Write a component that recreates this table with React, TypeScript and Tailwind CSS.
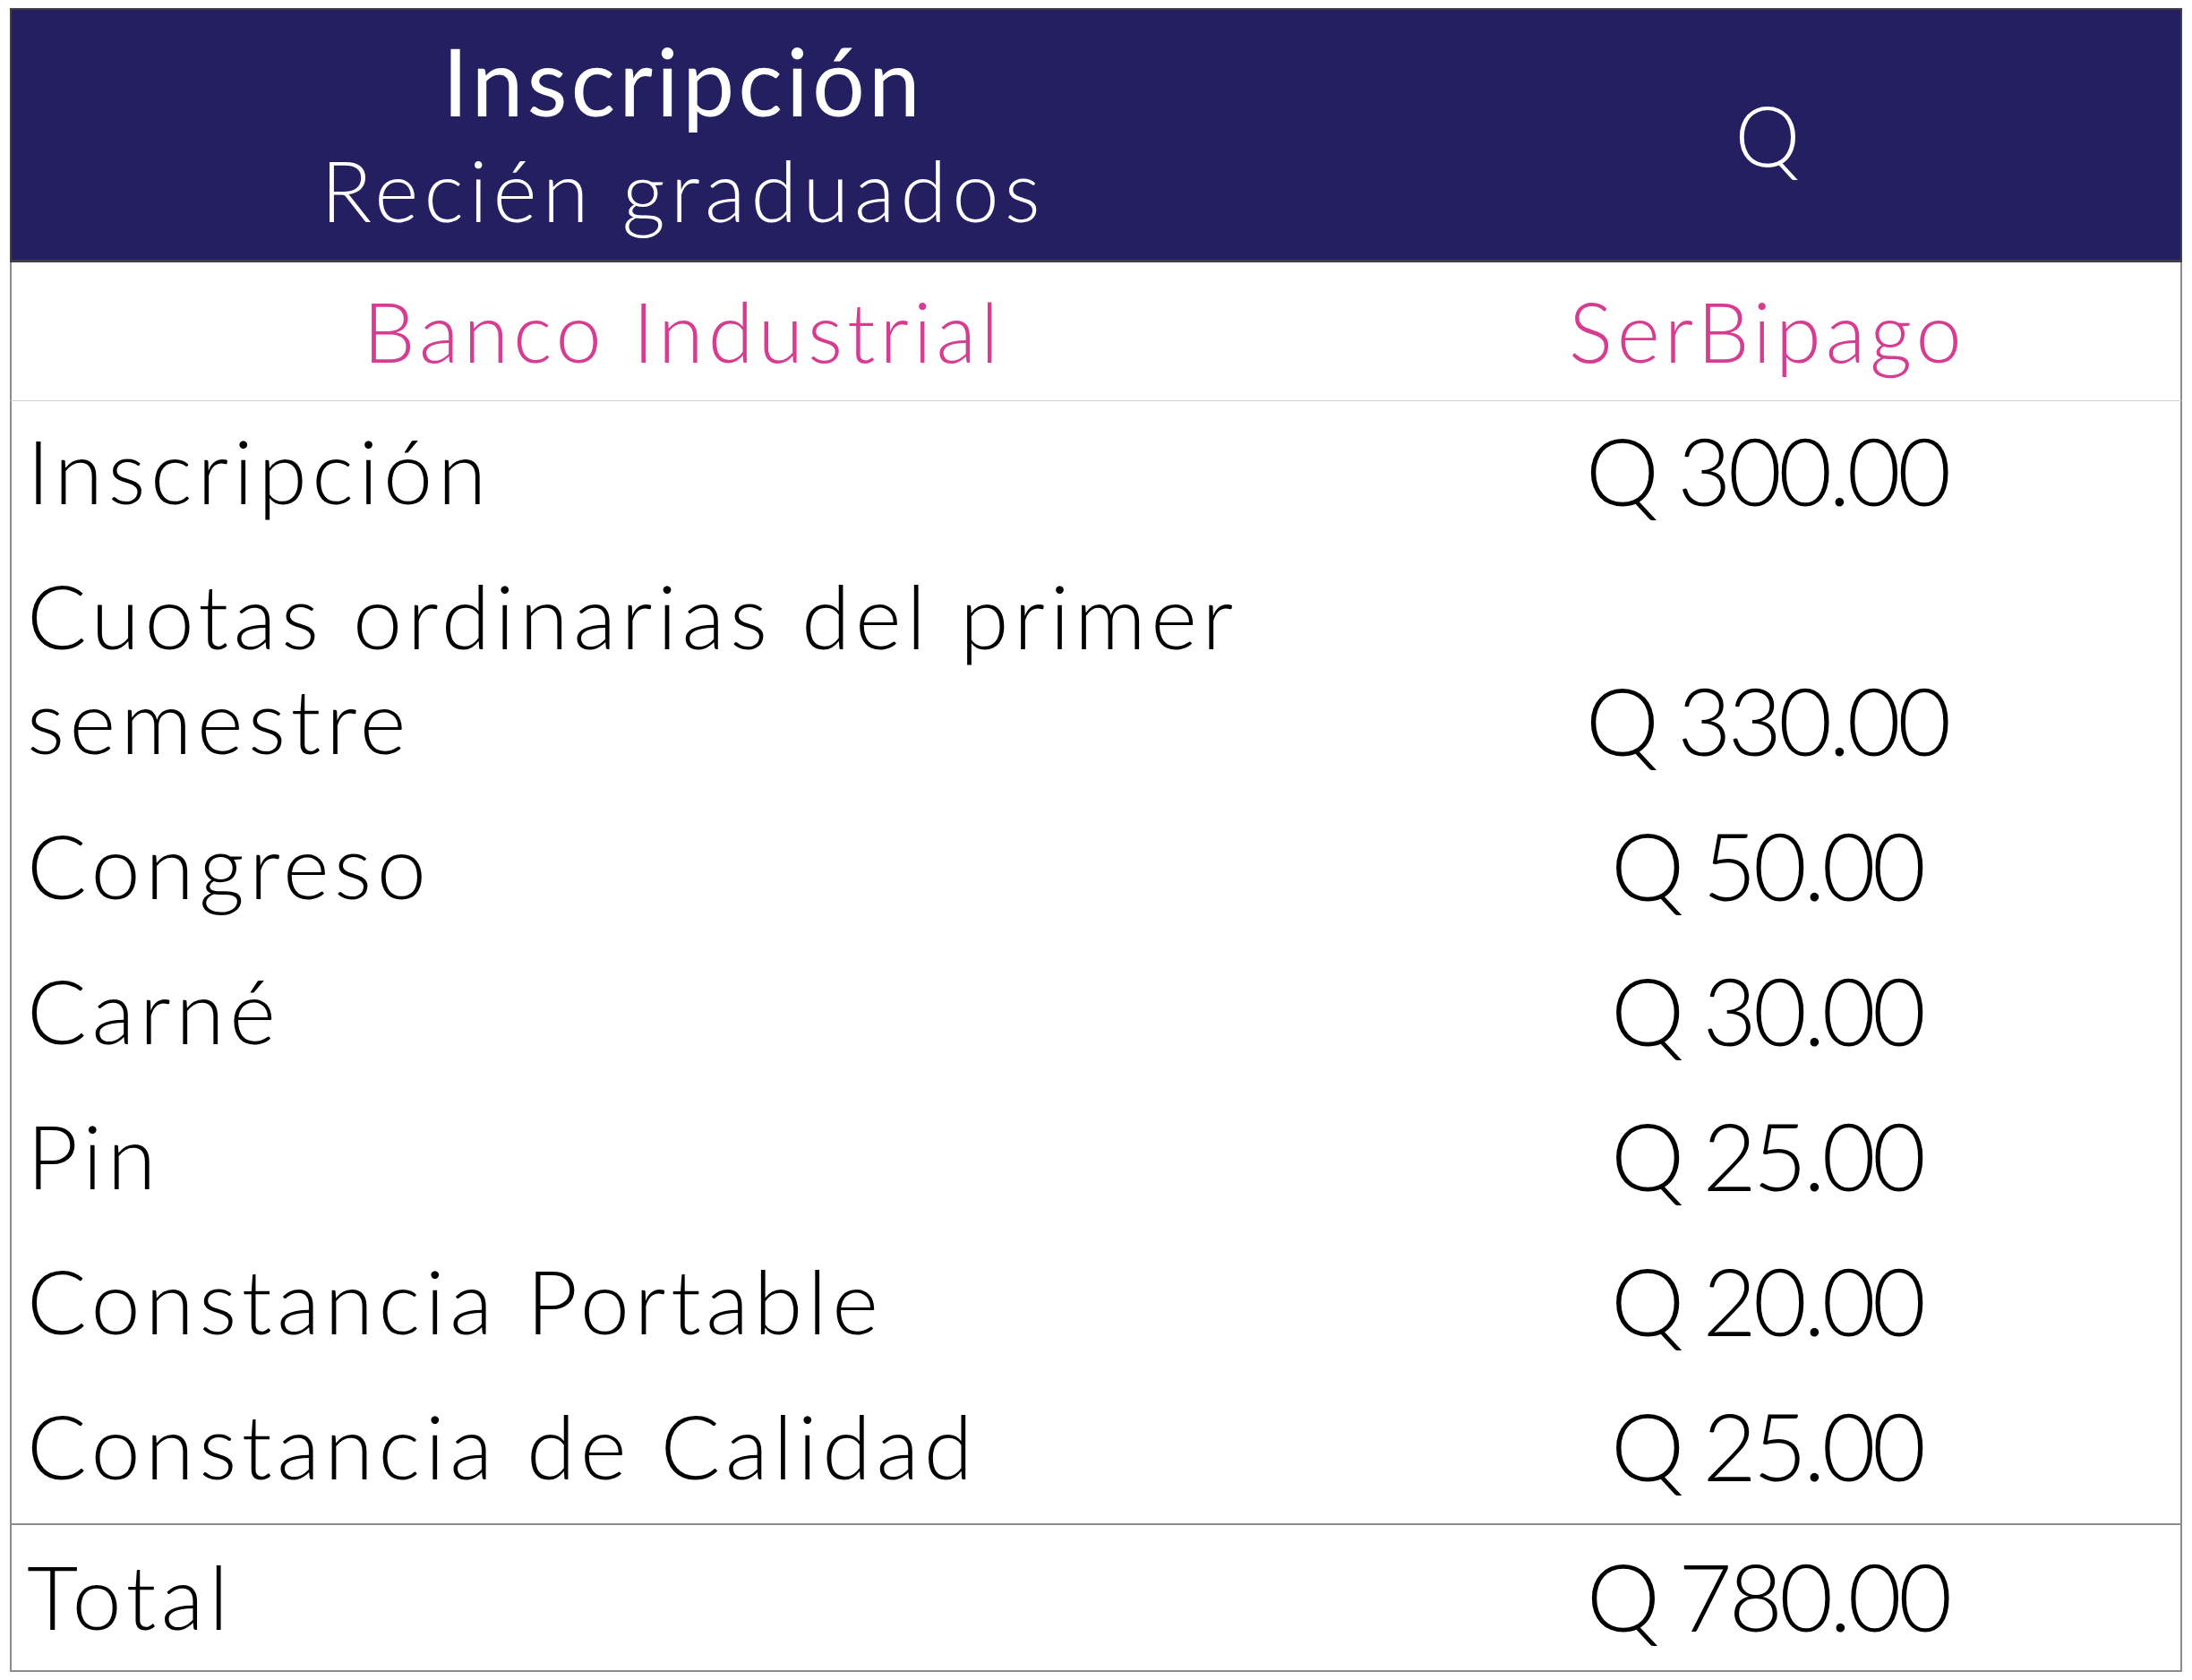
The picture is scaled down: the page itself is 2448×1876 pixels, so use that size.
const rows: { label: string[]; price: string }[] = [
  { label: ['Inscripción'], price: 'Q 300.00' },
  { label: ['Cuotas ordinarias del primer', 'semestre'], price: 'Q 330.00' },
  { label: ['Congreso'], price: 'Q 50.00' },
  { label: ['Carné'], price: 'Q 30.00' },
  { label: ['Pin'], price: 'Q 25.00' },
  { label: ['Constancia Portable'], price: 'Q 20.00' },
  { label: ['Constancia de Calidad'], price: 'Q 25.00' },
];

function FeeRow({ label, price }: { label: string[]; price: string }) {
  return (
    <div className="grid grid-cols-[1498px_1fr] pt-[18px] pb-[27px]">
      <div className="pl-[17px] text-[99px] leading-[117px] tracking-[5.5px] font-light text-black">
        {label.map((line, i) => (
          <div key={i}>{line}</div>
        ))}
      </div>
      <div className="flex items-end justify-center text-[104px] leading-[117px] tracking-[-4px] font-light text-black">
        {price}
      </div>
    </div>
  );
}

export default function App() {
  return (
    <div className="min-h-screen bg-white pt-[9px] pl-[11px] [font-family:Lato,'Open_Sans',sans-serif]">
      <div className="w-[2426px]">
        {/* Title band */}
        <div className="grid grid-cols-[1500px_1fr] h-[284px] bg-[#231f61] border-2 border-b-[3px] border-[#3f3f44] text-white">
          <div className="flex flex-col items-center justify-center">
            <div className="text-[104px] leading-[122px] tracking-[4px]">Inscripción</div>
            <div className="text-[94px] leading-[122px] tracking-[6px] font-light">Recién graduados</div>
          </div>
          <div className="flex items-center justify-center text-[92px] font-light">Q</div>
        </div>

        {/* Payment channel */}
        <div className="grid grid-cols-[1500px_1fr] h-[155px] items-center border-x-2 border-b border-[#8c8c8c] border-b-[#cfcfcf] text-[#d63c92] text-[92px] tracking-[5px] font-light">
          <div className="text-center">Banco Industrial</div>
          <div className="text-center">SerBipago</div>
        </div>

        {/* Fee items */}
        <div className="pb-[2px] border-x-2 border-[#8c8c8c]">
          {rows.map((r, i) => (
            <FeeRow key={i} label={r.label} price={r.price} />
          ))}
        </div>

        {/* Total */}
        <div className="grid grid-cols-[1500px_1fr] h-[166px] items-center border-2 border-[#8c8c8c]">
          <div className="pl-[17px] pb-[4px] text-[99px] tracking-[5.5px] font-light text-black">Total</div>
          <div className="pb-[4px] text-center text-[104px] tracking-[-4px] font-light text-black">Q 780.00</div>
        </div>
      </div>
    </div>
  );
}
